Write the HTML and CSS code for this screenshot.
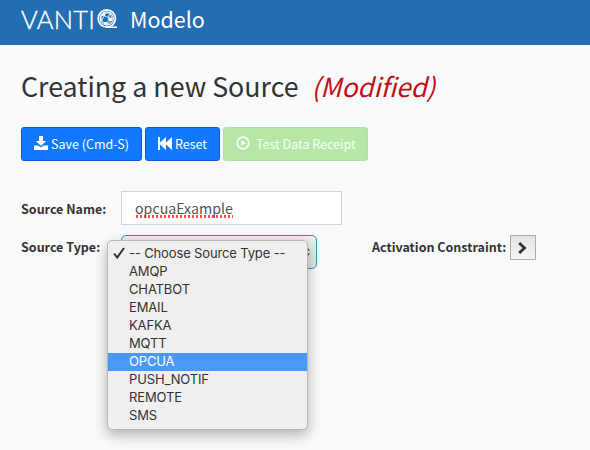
FILE: index.html
```html
<!DOCTYPE html>
<html lang="en">
<head>
<meta charset="utf-8">
<title>VANTIQ Modelo</title>
<link rel="stylesheet" href="styles.css">
</head>
<body>
<header class="topbar">
  <span class="brand">VANTI</span>
  <svg class="brand-q" width="20" height="20" viewBox="0 0 20 20" fill="none" stroke="#fff">
    <circle cx="9.8" cy="9.5" r="8.6" stroke-width="1.7"/>
    <circle cx="9.8" cy="9.5" r="6.6" stroke-width="1.1"/>
    <path d="M4 5.5L12.5 3.5L15.5 10L10.5 15.5L4.5 12ZM4 5.5L15.5 10M12.5 3.5L10.5 15.5M4.5 12L8 5" stroke-width=".8"/>
    <path d="M5 4h3v3H5zM12 9h3v3h-3zM7 13h3v2H7z" fill="#fff" stroke="none"/>
    <path d="M9.5 18.2H20" stroke-width="1.6"/>
  </svg>
  <span class="product">Modelo</span>
</header>
<main class="content">
  <h1 class="title"><span class="title-text">Creating a new Source</span><em class="modified">(Modified)</em></h1>
  <div class="actions">
    <button class="btn save"><svg width="14" height="14" viewBox="0 0 14 14" fill="currentColor"><path d="M5 0h4v5h3.2L7 10 1.8 5H5zM0 9.5h4l3 2 3-2h4V14H0z"/></svg><span>Save (Cmd-S)</span></button>
    <button class="btn reset"><svg width="14" height="13" viewBox="0 0 14 13" fill="currentColor"><path d="M0 0h2v5.6L8 0v5.6L14 0v13L8 7.4V13L2 7.4V13H0z"/></svg><span>Reset</span></button>
    <button class="btn test"><svg width="14" height="14" viewBox="0 0 14 14"><circle cx="7" cy="7" r="5.8" fill="none" stroke="currentColor" stroke-width="1.8"/><path d="M5.3 4.2L10 7L5.3 9.8z" fill="currentColor"/></svg><span>Test Data Receipt</span></button>
  </div>
  <div class="row name-row">
    <label class="label"><span class="name-label">Source Name:</span></label>
    <div class="input"><span class="value">opcuaExample</span></div>
  </div>
  <div class="row type-row">
    <label class="label"><span class="type-label">Source Type:</span></label>
    <div class="select">
      <svg class="arrows" width="8" height="12" viewBox="0 0 8 12" fill="#333"><path d="M4 0l4 4.5H0zM4 12l4-4.5H0z"/></svg>
      <ul class="menu">
        <li><svg class="check" width="12" height="12" viewBox="0 0 12 12" fill="none" stroke="#333" stroke-width="2"><path d="M1 6.5L4.2 10.5L11 1"/></svg><span class="choose">-- Choose Source Type --</span></li>
        <li><span>AMQP</span></li>
        <li><span>CHATBOT</span></li>
        <li><span>EMAIL</span></li>
        <li><span>KAFKA</span></li>
        <li><span>MQTT</span></li>
        <li class="active"><span>OPCUA</span></li>
        <li><span>PUSH_NOTIF</span></li>
        <li><span>REMOTE</span></li>
        <li><span>SMS</span></li>
      </ul>
    </div>
    <div class="constraint">
      <span class="constraint-label">Activation Constraint:</span>
      <button class="expand"><svg width="9" height="12" viewBox="0 0 9 12" fill="none" stroke="#333" stroke-width="2.8"><path d="M1.2 1L6.5 6L1.2 11"/></svg></button>
    </div>
  </div>
</main>
</body>
</html>
```
FILE: styles.css
```css
* { box-sizing: border-box; }
body {
  margin: 0;
  height: 450px;
  overflow: hidden;
  background: #f9fafc;
  color: #333;
  font-family: "Noto Sans CJK SC", "Open Sans", sans-serif;
  font-size: 12.5px;
}
.topbar {
  display: flex;
  height: 45px;
  padding: 0 21px;
  background: #236db3;
  color: #fff;
}
.brand {
  width: 76px;
  font: 300 25.5px/38px Lato, sans-serif;
  letter-spacing: .3px;
  -webkit-text-stroke: .35px #fff;
}
.brand-q { margin-top: 9px; }
.product {
  margin-left: 13px;
  font-size: 21.5px;
  line-height: 37px;
}
.content { padding: 0 21px; }
.title {
  display: flex;
  gap: 13px;
  height: 82px;
  margin: 0;
  padding-top: 21px;
  font-size: 26.8px;
  font-weight: 400;
  line-height: 40px;
  white-space: nowrap;
}
.modified { color: #c40d17; font-size: 26.2px; letter-spacing: -.1px; }
.actions { display: flex; gap: 3px; }
.btn {
  display: flex;
  align-items: center;
  height: 34px;
  padding: 0 0 0 12px;
  border: 1px solid #0b5cd0;
  border-radius: 3px;
  background: #1079ff;
  color: #fff;
  font: 12.5px/20px "Noto Sans CJK SC", sans-serif;
  white-space: nowrap;
}
.btn svg { flex: none; margin-top: -2px; }
.save { width: 121px; gap: 3px; }
.reset { width: 75px; gap: 3px; }
.test {
  width: 145px;
  gap: 6px;
  border-color: #addfa6;
  background: #b6e7a6;
  color: #f8fff6;
}
.row { display: flex; font-weight: 700; white-space: nowrap; }
.label { width: 100px; line-height: 20px; }
.name-row { margin-top: 30px; }
.name-row .label { padding-top: 8px; }
.input {
  width: 221px;
  height: 34px;
  padding: 6px 13px;
  border: 1px solid #cfd3db;
  background: #fff;
  color: #555;
  font-size: 14.2px;
  font-weight: 400;
  line-height: 20px;
}
.value {
  display: inline-block;
  height: 20px;
  background: radial-gradient(circle, #f5493f 1.1px, transparent 1.5px) 0 100% / 4px 3px repeat-x;
}
.type-row { margin-top: 10px; }
.type-row .label { padding-top: 2px; }
.select {
  position: relative;
  display: flex;
  align-items: center;
  justify-content: flex-end;
  width: 196px;
  height: 34px;
  padding-right: 6px;
  border: 1px solid #3c8dbc;
  border-radius: 5px;
  background: linear-gradient(#eee, #e1e3e5);
}
.menu {
  position: absolute;
  top: 4px;
  left: -15px;
  width: 201px;
  height: 190px;
  margin: 0;
  padding: 4px 0;
  border: 1px solid #b8b8b8;
  border-radius: 5px;
  background: #efefef;
  box-shadow: 0 5px 13px rgba(0, 0, 0, .3);
  list-style: none;
  font: 400 13px/18px Inter, sans-serif;
  letter-spacing: -.14px;
}
.menu li {
  display: flex;
  align-items: center;
  height: 18px;
  padding: 0 0 2px 21px;
}
.menu .active { background: #4899fb; color: #fff; }
.check { margin: 0 4px 0 -16px; }
.constraint { display: flex; margin-left: 55px; }
.constraint-label { width: 138px; padding-top: 2px; line-height: 20px; }
.expand {
  display: flex;
  align-items: center;
  justify-content: center;
  width: 26px;
  height: 25px;
  padding: 0 2px 0 0;
  border: 1px solid #acacac;
  background: linear-gradient(#e3e3e3, #f5f5f5);
}
```
